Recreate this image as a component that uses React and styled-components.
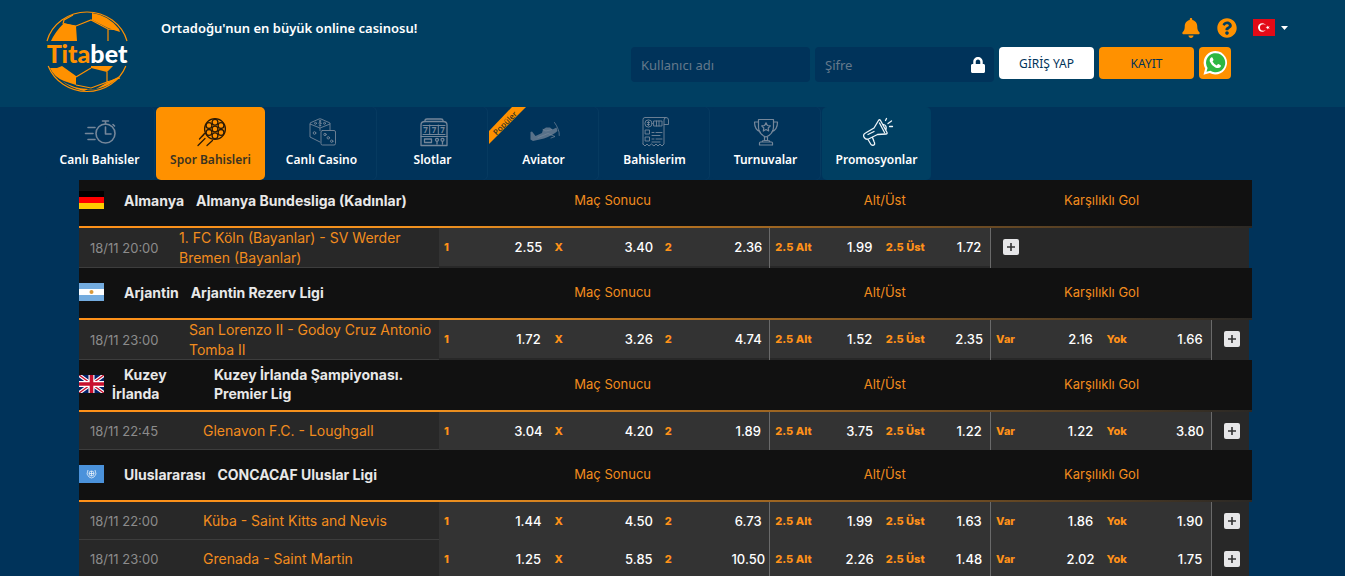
import React from 'react';
import styled, { createGlobalStyle, css } from 'styled-components';
import { FaBell, FaQuestionCircle, FaLock } from 'react-icons/fa';

const orange = '#ff9100';
const uiFont = "'Noto Sans', 'Open Sans', sans-serif";
const tableFont = "Inter, 'Noto Sans', sans-serif";

const GlobalStyle = createGlobalStyle`
  *, *::before, *::after { box-sizing: border-box; }
  html { background: #00335a; overflow: hidden; }
  body { margin: 0; font-family: ${uiFont}; color: #fff; }
  button, input { font-family: inherit; }
`;

/* ---------- header ---------- */

const Header = styled.header`
  display: flex;
  align-items: flex-start;
  min-height: 107px;
  padding: 0 57px 0 45px;
  background: #003f62;
`;

const LogoLink = styled.a`
  display: block;
  width: 84px;
  height: 80px;
  margin-top: 12px;
  flex: none;
  svg { display: block; overflow: visible; }
`;

const Slogan = styled.p`
  margin: 18px 0 0 32px;
  font-size: 13px;
  line-height: 20px;
  font-weight: 600;
  white-space: nowrap;
`;

const HeaderTools = styled.div`
  margin-left: auto;
  display: flex;
  flex-direction: column;
  align-items: flex-end;
`;

const QuickRow = styled.div`
  display: flex;
  align-items: center;
  height: 47px;
  padding-top: 8px;
`;

const IconButton = styled.button`
  display: flex;
  align-items: center;
  gap: 6px;
  padding: 0;
  margin-left: 16px;
  border: 0;
  background: none;
  color: ${(p) => p.$color || orange};
  cursor: pointer;
`;

const LoginForm = styled.form`
  display: flex;
  align-items: flex-start;
  gap: 5px;
  margin-right: 57px;
`;

const Field = styled.label`
  display: flex;
  align-items: center;
  width: 179px;
  height: 35px;
  padding: 0 8px 0 10px;
  border-radius: 4px;
  background: #00335a;
  color: #fff;
`;

const TextInput = styled.input`
  flex: 1;
  min-width: 0;
  padding: 0;
  border: 0;
  outline: 0;
  background: none;
  color: #fff;
  font-size: 13px;
  line-height: 20px;
  &::placeholder { color: #64798b; opacity: 1; }
`;

const ActionButton = styled.button`
  width: ${(p) => (p.$square ? '32px' : '95px')};
  height: 32px;
  padding: 0;
  display: flex;
  align-items: center;
  justify-content: center;
  border: 0;
  border-radius: 4px;
  background: ${(p) => (p.$primary ? orange : '#fff')};
  color: #00335a;
  font-size: 12px;
  cursor: pointer;
`;

/* ---------- navigation ---------- */

const Nav = styled.nav`
  position: relative;
  z-index: 1;
  display: flex;
  gap: 2px;
  padding-left: 45px;
  background: #00335a;
`;

const NavItem = styled.a`
  position: relative;
  display: flex;
  flex-direction: column;
  align-items: center;
  width: 109px;
  height: 73px;
  padding-top: 9px;
  border-radius: 5px;
  color: #fff;
  text-decoration: none;
  font-size: 12px;
  font-weight: 600;
  line-height: 20px;
  white-space: nowrap;
  box-shadow: 1px 0 0 #063a60;
  svg { display: block; margin-bottom: 2px; color: #75879a; }
  ${(p) => p.$state === 'active' && css`
    background: ${orange};
    color: #3b3320;
    box-shadow: none;
    svg { color: #2b1a05; }
  `}
  ${(p) => p.$state === 'lit' && css`
    background: #003f62;
    box-shadow: none;
    svg { color: #eef4f8; }
  `}
`;

const Ribbon = styled.span`
  position: absolute;
  top: 0;
  left: 0;
  width: 37px;
  height: 37px;
  display: flex;
  align-items: center;
  justify-content: center;
  padding: 0 6px 6px 0;
  clip-path: polygon(0 24px, 23px 0, 100% 0, 0 100%);
  background: ${orange};
  color: #33301f;
  font-size: 8px;
  font-weight: 500;
  span { transform: rotate(-45deg); }
`;

/* ---------- betting tables ---------- */

const Board = styled.main`
  margin: -4px 93px 0 79px;
  font-family: ${tableFont};
`;

const LeagueTable = styled.table`
  width: 100%;
  table-layout: fixed;
  border-collapse: separate;
  border-spacing: 0;
`;

const Col = styled.col`
  width: ${(p) => p.$width}px;
`;

const LeagueRow = styled.tr`
  background: linear-gradient(90deg, #ff9119, #f0911f 30%, #2a2825) bottom / 100% 2px no-repeat, #111;
`;

const LeagueCell = styled.th`
  height: 52px;
  padding: 0 0 4px;
  text-align: left;
`;

const LeagueTitle = styled.div`
  display: flex;
  align-items: center;
  gap: 12px;
  color: #e8e8e8;
  font-size: 14px;
  line-height: 19px;
  font-weight: 700;
  svg { flex: none; display: block; margin-right: -4px; }
`;

const Country = styled.span`
  flex: none;
  width: ${(p) => (p.$width ? `${p.$width}px` : 'auto')};
  text-indent: 12px;
`;

const LeagueName = styled.span`
  max-width: 216px;
`;

const MarketHead = styled.th`
  height: 52px;
  padding: 0 0 4px ${(p) => p.$lead}px;
  color: #f28c1e;
  font-size: 13px;
  line-height: 19px;
  font-weight: 400;
`;

const MatchRow = styled.tr`
  background: #282828;
`;

const DateCell = styled.td`
  padding: 0 0 0 11px;
  box-shadow: inset 0 -1px 0 #3d3d3d;
  color: #8c8c8c;
  font-size: 13px;
  white-space: nowrap;
`;

const TeamsCell = styled.td`
  padding: 0;
  box-shadow: inset 0 -1px 0 #3d3d3d;
  a {
    display: block;
    color: #f28c1e;
    font-size: 14px;
    line-height: 20px;
    text-decoration: none;
  }
`;

const OddsCell = styled.td`
  height: 38px;
  padding: 0;
  vertical-align: top;
  ${(p) => p.$last && 'border-right: 1px solid #6a6a6a;'}
`;

const OddsButton = styled.button`
  display: flex;
  align-items: center;
  width: 100%;
  height: 38px;
  padding: 0 0 0 5px;
  border: 0;
  background: #333;
  font-family: ${tableFont};
  cursor: pointer;
`;

const Pick = styled.span`
  flex: 1;
  text-align: left;
  color: #ff9119;
  font-size: 11px;
  font-weight: 800;
`;

const Price = styled.span`
  width: 42px;
  text-align: center;
  color: #fff;
  font-size: 13px;
  font-weight: 500;
`;

const MoreCell = styled.td`
  padding: 0;
  vertical-align: top;
  background: #282828;
  background-clip: padding-box;
  border-right: 3px solid #00335a;
`;

const MoreButton = styled.button`
  display: flex;
  align-items: center;
  height: 37px;
  padding: 0 0 0 12px;
  border: 0;
  background: none;
  color: #e6e6e8;
  cursor: pointer;
`;

/* ---------- drawings ---------- */

const Logo = () => (
  <svg width="84" height="80" viewBox="45 12 84 80" fill="none" stroke={orange} strokeWidth="1.2" role="img" aria-label="Titabet">
    <path d="M47 41A41.5 39.5 0 0 1 127 41M48.200 66A41.5 39.5 0 0 0 125.800 66" />
    <path d="M64 24 76 26 91 20 108 29V41M63 24 64 20 73 15M119 30 108 29M76 77 91 68M107 72V82L91 88 76 85M107 82 120 78" />
    <g fill={orange} stroke="none">
      <path d="M64 23 76 26 77 41H51Q55 32 64 23ZM92 13Q108 15 119 29L120 32 108 28 92 20Z" />
      <path d="M50 68 57 68 62 66 76 76V85L64 81Q54 77 50 68ZM91 66H113L107 72 91 68ZM108 82 120 76Q106 91 82 90L96 89ZM62 81Q72 88 88 89L84 91Q70 88 62 81Z" />
    </g>
    <text x="87" y="63" textAnchor="middle" stroke="none" fontFamily="Lato, sans-serif" fontWeight="900" fontSize="25">
      <tspan fill={orange}>Tita</tspan><tspan fill="#fff">bet</tspan>
    </text>
  </svg>
);

const Icon = ({ children, w = 1.2 }) => (
  <svg width="40" height="32" viewBox="0 0 40 32" fill="none" stroke="currentColor" strokeWidth={w} strokeLinecap="round" strokeLinejoin="round" aria-hidden="true">
    {children}
  </svg>
);

const StopwatchIcon = () => (
  <Icon w={1.6}>
    <circle cx="25.5" cy="17.5" r="9.5" />
    <path d="M22.5 5H28.5M25.5 5V8M33 8.5 34.5 10M25.5 11V18H31M8 11.5H15M5.5 17.5H13M8 23.5H15" />
  </Icon>
);

const BallIcon = () => (
  <Icon w={1.3}>
    <circle cx="24" cy="13" r="10.4" />
    <circle cx="24" cy="13" r="2.9" />
    <circle cx="24" cy="6.2" r="2.9" />
    <circle cx="24" cy="19.8" r="2.9" />
    <circle cx="18" cy="9.6" r="2.9" />
    <circle cx="30" cy="9.6" r="2.9" />
    <circle cx="18" cy="16.4" r="2.9" />
    <circle cx="30" cy="16.4" r="2.9" />
    <path d="M13.500 17.500 8.500 23M14 22.500 7 29.500M21.500 24.500 16 29.500M11 20.500 13 18.500" />
  </Icon>
);

const DiceIcon = () => (
  <Icon w={0.9}>
    <path d="M18 14.5V12L8 8V21L18 26M8 8Q7.500 7 9 6.500L17 3Q18 2.600 19 3L27 6.500Q28.500 7 28 8L18 12M28 8V14" />
    <rect x="19" y="14.500" width="14.500" height="14.500" rx="1.500" />
    <circle cx="12.500" cy="17" r="1.300" />
    <circle cx="13.500" cy="7.300" r="1" /><circle cx="18" cy="7.300" r="1" /><circle cx="22.500" cy="7.300" r="1" />
    <circle cx="18" cy="5" r=".700" /><circle cx="18" cy="9.600" r=".700" />
    <circle cx="23" cy="18.500" r="1.200" /><circle cx="26.300" cy="21.800" r="1.200" /><circle cx="29.700" cy="25.200" r="1.200" />
  </Icon>
);

const SlotIcon = () => (
  <Icon w={1.3}>
    <path d="M12 5.500V4.500Q12 3 14 3H28Q30 3 30 4.500V5.500" />
    <path d="M8 29.500V9Q8 5.500 12 5.500H30Q34 5.500 34 9V29.500Z" />
    <path d="M8 20.500H34M16.700 9V18.500M25.300 9V18.500M10 9.500H32M10 18.500H32" strokeWidth="1" />
    <rect x="11.500" y="23" width="7" height="3.500" />
    <circle cx="24" cy="23.800" r="1.500" /><circle cx="29.500" cy="23.800" r="1.500" />
    <path d="M24 25.500V28M29.500 25.500V28" />
    <g fill="currentColor" stroke="none" fontFamily="Open Sans, sans-serif" fontWeight="700" fontSize="8" textAnchor="middle">
      <text x="12.500" y="17">7</text><text x="21" y="17">7</text><text x="29.500" y="17">7</text>
    </g>
  </Icon>
);

const PlaneIcon = () => (
  <Icon w={0.7}>
    <g fill="currentColor" fillOpacity=".75" stroke="none">
      <path d="M6.500 16 8 15.500 11.500 20 18 17 19 13.500 22 11.500 26 11.500 28.500 13.500 32.500 11.500 33.500 15Q28 20 20 22.500L9 25 6.500 23.500Z" />
    </g>
    <path d="M14 21.500 24 17.500 31 20.500 27 22M30.500 6.500Q33 10 34 13Q35.500 16 35.300 19.500M19 13.500 22 15 28 13.500" />
  </Icon>
);

const ReceiptIcon = () => (
  <Icon w={0.9}>
    <path d="M8 28V3.500Q8 1.500 10 1.500H31Q33.500 1.500 33.500 4V8.500H29V28L27 30 25 28 23 30 21 28 19 30 16.500 28 14 30 12 28 10 30 8 28M29 8.500V4Q29 1.500 31 1.500" />
    <circle cx="13.500" cy="7.500" r="3.600" />
    <path d="M13.500 5.500V9.500M12.300 6.500H14.500M12.300 8.500H14.500M19 5H27V10H19ZM21.500 5V10M24 5V10" />
    <rect x="10.500" y="14" width="4" height="4" /><rect x="10.500" y="21" width="4" height="4" />
    <path d="M17 16.500H19M21 16.500H27M17 19.500H25M17 23H19M21 23H27M17 26H25" />
  </Icon>
);

const TrophyIcon = () => (
  <Icon w={1.2}>
    <path d="M12.500 3.500H27.500V11Q27.500 18 20 21Q12.500 18 12.500 11ZM12.500 6H8.500Q8.500 14 14.500 16M27.500 6H31.500Q31.500 14 25.500 16" />
    <path d="M18.500 21V24.500M21.500 21V24.500M16 26Q16 24.500 18 24.500H22Q24 24.500 24 26M13.500 29V27Q13.500 26 14.500 26H25.500Q26.500 26 26.500 27V29Z" />
    <path d="M20 6.800 21.400 9.500 24.300 9.900 22.200 12 22.700 15 20 13.500 17.300 15 17.800 12 15.700 9.900 18.600 9.500Z" />
  </Icon>
);

const MegaphoneIcon = () => (
  <Icon w={1.3}>
    <path d="M8.500 17 17 12 21.500 4.500Q22.500 3 23.500 4.500L30 16.500Q30.500 18 29 18L20.500 18.500 11.500 23Q9 24 7.200 21.500Q5.500 18.500 8.500 17ZM22.500 7 27.500 16.500M26.500 8.500Q30 9.500 29 13.500M11 18.500 17 15.500" />
    <path d="M11 23.500 14 28.500Q16 30 17.500 28.500Q18 27 17 25.500L15.500 21.500M28.500 4.500 29.500 2.500M31 7.500 34.500 5M32.500 10.500H35.500" />
  </Icon>
);

const PlusIcon = () => (
  <svg width="16" height="16" viewBox="0 0 16 16" aria-hidden="true">
    <rect width="16" height="16" rx="2" fill="currentColor" />
    <path d="M8 4V12M4 8H12" stroke="#333" strokeWidth="1.600" />
  </svg>
);

const CaretIcon = () => (
  <svg width="7" height="4" viewBox="0 0 7 4" aria-hidden="true">
    <path d="M0 0H7L3.500 4Z" fill="currentColor" />
  </svg>
);

const WhatsAppIcon = () => (
  <svg width="26" height="26" viewBox="0 0 26 26" aria-hidden="true">
    <path d="M1.500 24.800 3.200 18.600A11.700 11.700 0 1 1 7.700 23Z" fill="#fff" />
    <path d="M4.500 21.800 5.600 18A9.600 9.600 0 1 1 8.400 20.800Z" fill="#2db742" />
    <path d="M9.600 7.200Q10.300 7 10.600 7.700L11.500 9.800Q11.700 10.300 10.500 11.500Q12 14.300 14.800 15.400Q16 13.900 16.400 14.100L18.700 15.200Q19.200 15.700 18.500 17Q16.600 19 13.300 17.400Q9.300 15.500 7.800 11.600Q7.200 8.600 9.600 7.200Z" fill="#fff" />
  </svg>
);

const Flag = ({ code }) => (
  <svg width={code === 'tr' ? 22 : 25} height={code === 'tr' ? 17 : 18} viewBox={code === 'tr' ? '0 0 22 17' : '0 0 25 18'} aria-hidden="true">
    {code === 'tr' && (<>
      <path fill="#e30a17" d="M0 0H22V17H0Z" />
      <circle cx="9.200" cy="8.500" r="4.200" fill="#fff" /><circle cx="10.300" cy="8.500" r="3.300" fill="#e30a17" />
      <path fill="#fff" d="M12.500 8.500 14.200 8 14.200 6.400 15.200 7.700 16.700 7.200 15.800 8.500 16.700 9.800 15.200 9.300 14.200 10.600V9Z" />
    </>)}
    {code === 'de' && (<><path fill="#000" d="M0 0H25V6H0Z" /><path fill="#f00" d="M0 6H25V12H0Z" /><path fill="#fc0" d="M0 12H25V18H0Z" /></>)}
    {code === 'ar' && (<><path fill="#74acdf" d="M0 0H25V18H0Z" /><path fill="#fff" d="M0 6H25V12H0Z" /><circle cx="12.500" cy="9" r="2" fill="#d99a3a" /></>)}
    {code === 'gb' && (<>
      <path fill="#012169" d="M0 0H25V18H0Z" />
      <path stroke="#fff" strokeWidth="3.600" d="M0 0 25 18M25 0 0 18" /><path stroke="#c8102e" strokeWidth="1.400" d="M0 0 25 18M25 0 0 18" />
      <path stroke="#fff" strokeWidth="6" d="M12.500 0V18M0 9H25" /><path stroke="#c8102e" strokeWidth="3.600" d="M12.500 0V18M0 9H25" />
    </>)}
    {code === 'un' && (<>
      <path fill="#4b92db" d="M0 0H25V18H0Z" />
      <g fill="none" stroke="#fff" strokeWidth=".8" strokeOpacity=".85"><circle cx="12.500" cy="8.500" r="2.500" /><path d="M9 5Q6.500 9.500 10 12L12.500 13 15 12Q18.500 9.500 16 5M12.500 6V11M10 8.500H15" /></g>
    </>)}
  </svg>
);

/* ---------- data ---------- */

const navItems = [
  ['Canlı Bahisler', StopwatchIcon],
  ['Spor Bahisleri', BallIcon, 'active'],
  ['Canlı Casino', DiceIcon],
  ['Slotlar', SlotIcon],
  ['Aviator', PlaneIcon, 'popular'],
  ['Bahislerim', ReceiptIcon],
  ['Turnuvalar', TrophyIcon],
  ['Promosyonlar', MegaphoneIcon, 'lit'],
];

const picks = ['1', 'X', '2', '2.5 Alt', '2.5 Üst', 'Var', 'Yok'];
const marketEnds = [2, 4, 6];

const leagues = [
  { flag: 'de', country: 'Almanya', name: 'Almanya Bundesliga (Kadınlar)', dateWidth: 100,
    matches: [['18/11 20:00', '1. FC Köln (Bayanlar) - SV Werder Bremen (Bayanlar)', ['2.55', '3.40', '2.36', '1.99', '1.72']]] },
  { flag: 'ar', country: 'Arjantin', name: 'Arjantin Rezerv Ligi', dateWidth: 110,
    matches: [['18/11 23:00', 'San Lorenzo II - Godoy Cruz Antonio Tomba II', ['1.72', '3.26', '4.74', '1.52', '2.35', '2.16', '1.66']]] },
  { flag: 'gb', country: 'Kuzey İrlanda', countryWidth: 90, name: 'Kuzey İrlanda Şampiyonası. Premier Lig', dateWidth: 124,
    matches: [['18/11 22:45', 'Glenavon F.C. - Loughgall', ['3.04', '4.20', '1.89', '3.75', '1.22', '1.22', '3.80']]] },
  { flag: 'un', country: 'Uluslararası', name: 'CONCACAF Uluslar Ligi', dateWidth: 124,
    matches: [
      ['18/11 22:00', 'Küba - Saint Kitts and Nevis', ['1.44', '4.50', '6.73', '1.99', '1.63', '1.86', '1.90']],
      ['18/11 23:00', 'Grenada - Saint Martin', ['1.25', '5.85', '10.50', '2.26', '1.48', '2.02', '1.75']],
    ] },
];

const League = ({ league }) => (
  <LeagueTable>
    <colgroup>
      <Col $width={league.dateWidth} />
      <Col $width={360 - league.dateWidth} />
      {picks.map((p) => <col key={p} />)}
      <Col $width={40} />
    </colgroup>
    <thead>
      <LeagueRow>
        <LeagueCell colSpan={2} scope="col">
          <LeagueTitle>
            <Flag code={league.flag} />
            <Country $width={league.countryWidth}>{league.country}</Country>
            <LeagueName>{league.name}</LeagueName>
          </LeagueTitle>
        </LeagueCell>
        <MarketHead colSpan={3} scope="colgroup" $lead={16}>Maç Sonucu</MarketHead>
        <MarketHead colSpan={2} scope="colgroup" $lead={8}>Alt/Üst</MarketHead>
        <MarketHead colSpan={2} scope="colgroup" $lead={0}>Karşılıklı Gol</MarketHead>
        <td />
      </LeagueRow>
    </thead>
    <tbody>
      {league.matches.map(([date, teams, odds]) => (
        <MatchRow key={teams}>
          <DateCell>{date}</DateCell>
          <TeamsCell><a href="#mac">{teams}</a></TeamsCell>
          {odds.map((price, i) => (
            <OddsCell key={picks[i]} $last={marketEnds.includes(i)}>
              <OddsButton type="button"><Pick>{picks[i]}</Pick><Price>{price}</Price></OddsButton>
            </OddsCell>
          ))}
          <MoreCell colSpan={8 - odds.length}>
            <MoreButton type="button" aria-label="Tüm bahisler"><PlusIcon /></MoreButton>
          </MoreCell>
        </MatchRow>
      ))}
    </tbody>
  </LeagueTable>
);

export default function App() {
  return (
    <>
      <GlobalStyle />
      <Header>
        <LogoLink href="#anasayfa"><Logo /></LogoLink>
        <Slogan>Ortadoğu'nun en büyük online casinosu!</Slogan>
        <HeaderTools>
          <QuickRow>
            <IconButton type="button" aria-label="Bildirimler"><FaBell size={20} /></IconButton>
            <IconButton type="button" aria-label="Yardım"><FaQuestionCircle size={20} /></IconButton>
            <IconButton type="button" aria-label="Dil seçimi" $color="#fff"><Flag code="tr" /><CaretIcon /></IconButton>
          </QuickRow>
          <LoginForm onSubmit={(e) => e.preventDefault()}>
            <Field><TextInput placeholder="Kullanıcı adı" aria-label="Kullanıcı adı" /></Field>
            <Field><TextInput type="password" placeholder="Şifre" aria-label="Şifre" /><FaLock size={16} /></Field>
            <ActionButton type="submit">GİRİŞ YAP</ActionButton>
            <ActionButton type="button" $primary>KAYIT</ActionButton>
            <ActionButton type="button" $primary $square aria-label="WhatsApp"><WhatsAppIcon /></ActionButton>
          </LoginForm>
        </HeaderTools>
      </Header>
      <Nav>
        {navItems.map(([label, NavIcon, state]) => (
          <NavItem key={label} href="#menu" $state={state}>
            {state === 'popular' && <Ribbon><span>Popüler</span></Ribbon>}
            <NavIcon />
            {label}
          </NavItem>
        ))}
      </Nav>
      <Board>
        {leagues.map((league) => <League key={league.name} league={league} />)}
      </Board>
    </>
  );
}
